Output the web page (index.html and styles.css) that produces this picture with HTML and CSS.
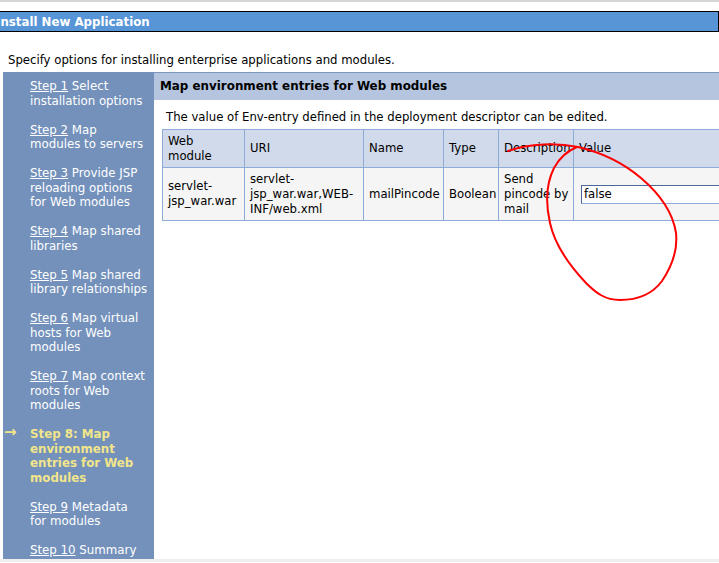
FILE: index.html
```html
<!DOCTYPE html>
<html>
<head>
<meta charset="utf-8">
<link rel="stylesheet" href="styles.css">
</head>
<body>
<div class="topline"></div>
<div class="titlebar"><span class="title">Install New Application</span></div>
<p class="intro">Specify options for installing enterprise applications and modules.</p>
<div class="wizard">
  <nav class="steps">
    <div class="step"><a>Step 1</a> Select<br>installation options</div>
    <div class="step"><a>Step 2</a> Map<br>modules to servers</div>
    <div class="step"><a>Step 3</a> Provide JSP<br>reloading options<br>for Web modules</div>
    <div class="step"><a>Step 4</a> Map shared<br>libraries</div>
    <div class="step"><a>Step 5</a> Map shared<br>library relationships</div>
    <div class="step"><a>Step 6</a> Map virtual<br>hosts for Web<br>modules</div>
    <div class="step"><a>Step 7</a> Map context<br>roots for Web<br>modules</div>
    <div class="step current"><span class="arrow">→</span>Step 8: Map<br>environment<br>entries for Web<br>modules</div>
    <div class="step"><a>Step 9</a> Metadata<br>for modules</div>
    <div class="step"><a>Step 10</a> Summary</div>
  </nav>
  <main class="panel">
    <div class="panel-head">Map environment entries for Web modules</div>
    <p class="panel-desc">The value of Env-entry defined in the deployment descriptor can be edited.</p>
    <table class="grid">
      <colgroup>
        <col class="c1"><col class="c2"><col class="c3"><col class="c4"><col class="c5"><col class="c6">
      </colgroup>
      <thead>
        <tr>
          <th>Web<br>module</th>
          <th>URI</th>
          <th>Name</th>
          <th>Type</th>
          <th>Description</th>
          <th>Value</th>
        </tr>
      </thead>
      <tbody>
        <tr>
          <td>servlet-<br>jsp_war.war</td>
          <td>servlet-<br>jsp_war.war,WEB-<br>INF/web.xml</td>
          <td>mailPincode</td>
          <td>Boolean</td>
          <td>Send<br>pincode by<br>mail</td>
          <td><input class="val" type="text" value="false"></td>
        </tr>
      </tbody>
    </table>
  </main>
</div>
<div class="bottomline"></div>
<svg class="scribble" width="719" height="563" viewBox="0 0 719 563">
  <path d="M508,151 C530,143 558,143 578,147 C600,152 622,162 641,178 C661,195 673,213 676,233 C678,251 672,266 662,281 C651,296 636,300 620,300 C605,300 596,293 586,283 C569,265 555,246 550,223 C545,201 547,182 554,168 C560,157 567,151 577,147" fill="none" stroke="#ff0000" stroke-width="2" stroke-linecap="round"/>
</svg>
</body>
</html>
```
FILE: styles.css
```css
html, body {
  margin: 0;
  padding: 0;
  background: #ffffff;
}
body {
  position: relative;
  width: 719px;
  height: 563px;
  overflow: hidden;
  font-family: "DejaVu Sans", Verdana, sans-serif;
  font-size: 11.7px;
  color: #000000;
}
.topline {
  height: 2px;
  background: #d6d6d6;
}
.titlebar {
  margin-top: 9px;
  height: 19px;
  background: #5795d6;
  border-top: 1px solid #000000;
  border-bottom: 1px solid #000000;
  border-right: 1px solid #000000;
  display: flex;
  align-items: center;
}
.title {
  color: #ffffff;
  font-weight: bold;
  font-size: 11.8px;
  margin-left: -4px;
  white-space: nowrap;
}
.intro {
  margin: 21px 0 0 8px;
  height: 19px;
  line-height: 14px;
  white-space: nowrap;
}
.wizard {
  display: flex;
  margin-left: 3px;
  height: 487px;
}
.steps {
  width: 151px;
  flex: none;
  background: #7391bb;
  padding-top: 7px;
  box-sizing: border-box;
  font-size: 11.8px;
}
.step {
  position: relative;
  padding-left: 27px;
  color: #ffffff;
  line-height: 14.5px;
  white-space: nowrap;
  margin-bottom: 14.5px;
}
.step a {
  text-decoration: underline;
  color: #ffffff;
}
.step.current {
  color: #f2e58a;
  font-weight: bold;
}
.arrow {
  position: absolute;
  left: 1px;
  top: -2px;
  font-size: 15px;
  font-weight: bold;
}
.panel {
  flex: 1;
  min-width: 0;
  overflow: hidden;
}
.panel-head {
  height: 28px;
  box-sizing: border-box;
  border-top: 1px solid #7c96bf;
  background: #b5c5df;
  padding-left: 6px;
  font-weight: bold;
  font-size: 11.9px;
  line-height: 27px;
  white-space: nowrap;
}
.panel-desc {
  margin: 10px 0 0 12px;
  line-height: 14px;
  white-space: nowrap;
}
.grid {
  margin: 5px 0 0 8px;
  border-collapse: collapse;
  table-layout: fixed;
  width: 782px;
  border: 1px solid #8eaad6;
  white-space: nowrap;
}
.c1 { width: 82px; }
.c2 { width: 119px; }
.c3 { width: 80px; }
.c4 { width: 55px; }
.c5 { width: 75px; }
.c6 { width: 371px; }
.grid th, .grid td {
  border: 1px solid #8eaad6;
  padding: 2px 2px 2px 5px;
  text-align: left;
  font-weight: normal;
  line-height: 15px;
  vertical-align: middle;
  overflow: hidden;
}
.grid th {
  background: #d1daea;
  height: 33px;
}
.grid td {
  background: #f5f5f5;
  height: 48px;
}
.val {
  margin-left: 2px;
  width: 200px;
  height: 19px;
  box-sizing: border-box;
  border: 1px solid #4b6a9b;
  border-bottom-color: #8eaad6;
  padding: 0 2px;
  font-family: "DejaVu Sans", Verdana, sans-serif;
  font-size: 11.7px;
  background: #ffffff;
}
.bottomline {
  height: 3px;
  background: #eeeeee;
}
.scribble {
  position: absolute;
  left: 0;
  top: 0;
  pointer-events: none;
}
```
